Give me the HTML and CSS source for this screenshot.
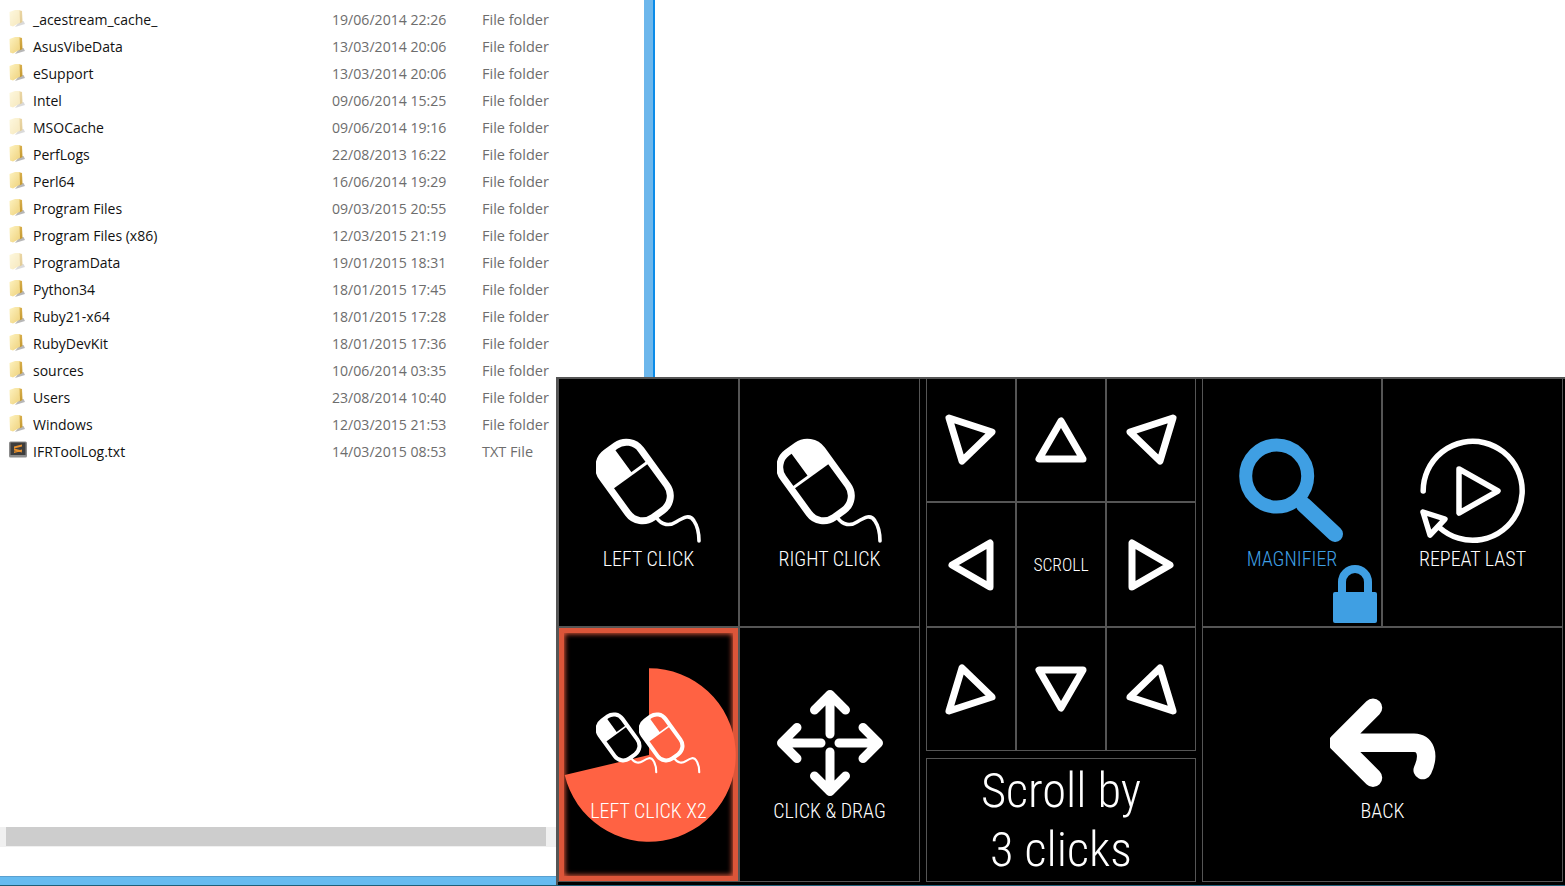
FILE: index.html
```html
<!DOCTYPE html>
<html lang="en">

<head>
    <meta charset="UTF-8">
    <meta name="viewport" content="width=device-width, initial-scale=1.0">
    <title>eye control panel</title>
    <link rel="stylesheet" href="styles.css">
</head>

<body>
    <svg class="defs" width="0" height="0" aria-hidden="true">
        <defs>
            <linearGradient id="folderBack" x1="0" y1="0" x2="0" y2="1">
                <stop offset="0" stop-color="#d9b04e"/>
                <stop offset="1" stop-color="#c4982f"/>
            </linearGradient>
            <linearGradient id="folderFront" x1="0" y1="0" x2="1" y2="1">
                <stop offset="0" stop-color="#fdf2bf"/>
                <stop offset="1" stop-color="#efd27c"/>
            </linearGradient>
            <symbol id="folder" viewBox="0 0 16 18">
                <path d="M10 13 L14.5 12 L16 15 L6 18 Z" fill="#999" opacity="0.7"/>
                <path d="M9.5 1 L13 2 L13.5 13 L10.5 14.5 Z" fill="url(#folderBack)"/>
                <path d="M0.5 3 L6 1 L10.5 1 L11 13.5 L4 17.5 L1 16.5 Z" fill="url(#folderFront)"/>
            </symbol>
            <symbol id="mouseBody" viewBox="0 0 106 106">
                <g transform="translate(38.5 43.5) rotate(-36)">
                    <rect x="-24" y="-40" width="48" height="80" rx="18" fill="none" stroke="#fff" stroke-width="7"/>
                    <line x1="-24" y1="-8" x2="24" y2="-8" stroke="#fff" stroke-width="3"/>
                </g>
                <path d="M60 79 C66 88 74 88 80 84 C88 79 94 76 98 83 C102 89 103 96 103 103" fill="none" stroke="#fff" stroke-width="3.6" stroke-linecap="round"/>
            </symbol>
            <symbol id="mouseLeft" viewBox="0 0 106 106">
                <use href="#mouseBody" width="106" height="106"/>
                <g transform="translate(38.5 43.5) rotate(-36)">
                    <path d="M-24 -8 V-22 A18 18 0 0 1 -6 -40 H3 V-8 Z" fill="#fff"/>
                </g>
            </symbol>
            <symbol id="mouseRight" viewBox="0 0 106 106">
                <use href="#mouseBody" width="106" height="106"/>
                <g transform="translate(38.5 43.5) rotate(-36)">
                    <path d="M24 -8 V-22 A18 18 0 0 0 6 -40 H-3 V-8 Z" fill="#fff"/>
                </g>
            </symbol>
        </defs>
    </svg>

    <div class="main">
        <div class="explorer">
            <div class="file-list">
                <div class="file-row hidden-item"><svg class="file-icon"><use href="#folder"/></svg><span class="file-name">_acestream_cache_</span><span class="file-date">19/06/2014 22:26</span><span class="file-type">File folder</span></div>
                <div class="file-row"><svg class="file-icon"><use href="#folder"/></svg><span class="file-name">AsusVibeData</span><span class="file-date">13/03/2014 20:06</span><span class="file-type">File folder</span></div>
                <div class="file-row"><svg class="file-icon"><use href="#folder"/></svg><span class="file-name">eSupport</span><span class="file-date">13/03/2014 20:06</span><span class="file-type">File folder</span></div>
                <div class="file-row hidden-item"><svg class="file-icon"><use href="#folder"/></svg><span class="file-name">Intel</span><span class="file-date">09/06/2014 15:25</span><span class="file-type">File folder</span></div>
                <div class="file-row hidden-item"><svg class="file-icon"><use href="#folder"/></svg><span class="file-name">MSOCache</span><span class="file-date">09/06/2014 19:16</span><span class="file-type">File folder</span></div>
                <div class="file-row"><svg class="file-icon"><use href="#folder"/></svg><span class="file-name">PerfLogs</span><span class="file-date">22/08/2013 16:22</span><span class="file-type">File folder</span></div>
                <div class="file-row"><svg class="file-icon"><use href="#folder"/></svg><span class="file-name">Perl64</span><span class="file-date">16/06/2014 19:29</span><span class="file-type">File folder</span></div>
                <div class="file-row"><svg class="file-icon"><use href="#folder"/></svg><span class="file-name">Program Files</span><span class="file-date">09/03/2015 20:55</span><span class="file-type">File folder</span></div>
                <div class="file-row"><svg class="file-icon"><use href="#folder"/></svg><span class="file-name">Program Files (x86)</span><span class="file-date">12/03/2015 21:19</span><span class="file-type">File folder</span></div>
                <div class="file-row hidden-item"><svg class="file-icon"><use href="#folder"/></svg><span class="file-name">ProgramData</span><span class="file-date">19/01/2015 18:31</span><span class="file-type">File folder</span></div>
                <div class="file-row"><svg class="file-icon"><use href="#folder"/></svg><span class="file-name">Python34</span><span class="file-date">18/01/2015 17:45</span><span class="file-type">File folder</span></div>
                <div class="file-row"><svg class="file-icon"><use href="#folder"/></svg><span class="file-name">Ruby21-x64</span><span class="file-date">18/01/2015 17:28</span><span class="file-type">File folder</span></div>
                <div class="file-row"><svg class="file-icon"><use href="#folder"/></svg><span class="file-name">RubyDevKit</span><span class="file-date">18/01/2015 17:36</span><span class="file-type">File folder</span></div>
                <div class="file-row"><svg class="file-icon"><use href="#folder"/></svg><span class="file-name">sources</span><span class="file-date">10/06/2014 03:35</span><span class="file-type">File folder</span></div>
                <div class="file-row"><svg class="file-icon"><use href="#folder"/></svg><span class="file-name">Users</span><span class="file-date">23/08/2014 10:40</span><span class="file-type">File folder</span></div>
                <div class="file-row"><svg class="file-icon"><use href="#folder"/></svg><span class="file-name">Windows</span><span class="file-date">12/03/2015 21:53</span><span class="file-type">File folder</span></div>
                <div class="file-row">
                    <svg class="file-icon" viewBox="0 0 18 18">
                        <rect x="0" y="0.5" width="18" height="16" rx="1.5" fill="#8c8c8c"/>
                        <rect x="1.5" y="1.5" width="15" height="12.5" fill="#3d3d3d"/>
                        <path d="M5 5.5 L13 3.5 V5.5 L5 7.5 Z M5 7.5 L13 9.5 V11.5 L5 9.5 Z M5 10.5 L13 8.5 V10 L5 12 Z" fill="#e8912e"/>
                    </svg>
                    <span class="file-name">IFRToolLog.txt</span><span class="file-date">14/03/2015 08:53</span><span class="file-type">TXT File</span>
                </div>
            </div>
            <div class="h-scroll">
                <div class="h-thumb"></div>
            </div>
        </div>
        <div class="window-edge"></div>
    </div>
    <div class="bottom-bar"></div>
    <div class="taskbar"></div>

    <div class="panel">
        <div class="group click-group">
            <div class="cell">
                <svg class="icon" viewBox="0 0 106 106"><use href="#mouseLeft" width="106" height="106"/></svg>
                <span class="label">LEFT CLICK</span>
            </div>
            <div class="cell">
                <svg class="icon" viewBox="0 0 106 106"><use href="#mouseRight" width="106" height="106"/></svg>
                <span class="label">RIGHT CLICK</span>
            </div>
            <div class="cell is-active">
                <svg class="dwell" viewBox="0 0 180 254">
                    <path d="M90 127 V40.3 A86.7 86.7 0 1 1 5.7 147 Z" fill="#ff6243"/>
                </svg>
                <svg class="icon" viewBox="0 0 106 106">
                    <use href="#mouseLeft" x="0" y="22" width="62" height="62"/>
                    <use href="#mouseLeft" x="43" y="22" width="62" height="62"/>
                </svg>
                <span class="label">LEFT CLICK X2</span>
            </div>
            <div class="cell">
                <svg class="icon" viewBox="-53 -53 106 106">
                    <g fill="none" stroke="#fff" stroke-width="9" stroke-linecap="round" stroke-linejoin="round">
                        <path d="M0 -48.5 V-9 M-15.5 -33 L0 -48.5 L15.5 -33"/>
                        <path d="M0 48.5 V9 M-15.5 33 L0 48.5 L15.5 33"/>
                        <path d="M-48.5 0 H-9 M-33 -15.5 L-48.5 0 L-33 15.5"/>
                        <path d="M48.5 0 H9 M33 -15.5 L48.5 0 L33 15.5"/>
                    </g>
                </svg>
                <span class="label">CLICK &amp; DRAG</span>
            </div>
        </div>

        <div class="scroll-col">
            <div class="group scroll-group">
                <div class="cell"><svg class="arrow" viewBox="-30 -30 60 60"><polygon points="-22,-22 21,-8 -9,21"/></svg></div>
                <div class="cell"><svg class="arrow" viewBox="-30 -30 60 60"><polygon points="0,-19 -22,19 22,19"/></svg></div>
                <div class="cell"><svg class="arrow" viewBox="-30 -30 60 60"><polygon points="22,-22 -21,-8 9,21"/></svg></div>
                <div class="cell"><svg class="arrow" viewBox="-30 -30 60 60"><polygon points="-19,0 19,-22 19,22"/></svg></div>
                <div class="cell"><span class="label small">SCROLL</span></div>
                <div class="cell"><svg class="arrow" viewBox="-30 -30 60 60"><polygon points="19,0 -19,-22 -19,22"/></svg></div>
                <div class="cell"><svg class="arrow" viewBox="-30 -30 60 60"><polygon points="-22,22 21,8 -9,-21"/></svg></div>
                <div class="cell"><svg class="arrow" viewBox="-30 -30 60 60"><polygon points="0,19 -22,-19 22,-19"/></svg></div>
                <div class="cell"><svg class="arrow" viewBox="-30 -30 60 60"><polygon points="22,22 -21,8 9,-21"/></svg></div>
            </div>
            <div class="scroll-amount"><span class="label big">Scroll by<br>3 clicks</span></div>
        </div>

        <div class="group extra-group">
            <div class="cell">
                <svg class="icon" viewBox="0 0 106 106">
                    <circle cx="37.7" cy="38" r="31" fill="none" stroke="#3f9fe3" stroke-width="13"/>
                    <line x1="65" y1="67" x2="96" y2="96" stroke="#3f9fe3" stroke-width="16" stroke-linecap="round"/>
                </svg>
                <span class="label is-blue">MAGNIFIER</span>
                <svg class="lock" viewBox="0 0 44 58">
                    <path d="M9 30 V17 A13 13 0 0 1 35 17 V30" fill="none" stroke="#3f9fe3" stroke-width="8"/>
                    <rect x="0" y="27" width="44" height="31" rx="2" fill="#3f9fe3"/>
                </svg>
            </div>
            <div class="cell">
                <svg class="icon" viewBox="0 0 106 106">
                    <g fill="none" stroke="#fff" stroke-width="5.5" stroke-linecap="round" stroke-linejoin="round">
                        <path d="M3.2 53 A49.5 49.5 0 1 1 20 90"/>
                        <polygon points="3,74 25,81 10,97"/>
                        <polygon points="39,31 78,53 39,75"/>
                    </g>
                </svg>
                <span class="label">REPEAT LAST</span>
            </div>
            <div class="cell wide">
                <svg class="icon" viewBox="0 0 106 106">
                    <path d="M43 17.7 L8 52.7 L43 87.7 M8 52.7 H84 C95 52.7 100 64 92.7 80" fill="none" stroke="#fff" stroke-width="18.5" stroke-linecap="round" stroke-linejoin="round"/>
                </svg>
                <span class="label">BACK</span>
            </div>
        </div>
    </div>
</body>

</html>
```

FILE: styles.css
```css
html, body {
    margin: 0;
    height: 886px;
    overflow: hidden;
    background-color: #ffffff;
}
body {
    position: relative;
    display: flex;
    flex-direction: column;
    font-family: "Open Sans", "Noto Sans", sans-serif;
}
.defs {
    position: absolute;
}

/* file explorer behind the panel */
.main {
    display: flex;
    height: 876px;
}
.explorer {
    width: 644px;
    display: flex;
    flex-direction: column;
}
.file-list {
    flex: 1;
    padding-top: 6px;
}
.file-row {
    display: flex;
    align-items: center;
    height: 27px;
    padding-left: 9px;
    font-size: 14.5px;
    white-space: nowrap;
}
.file-icon {
    width: 16px;
    height: 18px;
    margin-right: 8px;
    margin-top: -4px;
}
.file-row:last-child .file-icon {
    width: 18px;
    margin-right: 6px;
}
.hidden-item .file-icon {
    opacity: 0.5;
}
.file-name {
    width: 299px;
    font-size: 14px;
    color: #111111;
}
.file-date {
    width: 150px;
    font-size: 14.1px;
    color: #6d6d6d;
}
.file-type {
    color: #6d6d6d;
}
.h-scroll {
    height: 20px;
    margin-bottom: 29px;
    padding-left: 6px;
    background-color: #f0f0f0;
}
.h-thumb {
    width: 540px;
    height: 19px;
    background-color: #cdcdcd;
}
.window-edge {
    width: 9px;
    background-color: #6db7ec;
    border-right: 2px solid #0a8be8;
}
.bottom-bar {
    height: 8px;
    background-color: #66bbf0;
    border-top: 1px solid #5aa0d0;
}
.taskbar {
    flex: 1;
    background-color: #1f5f78;
}

/* eye tracker panel, floats over the desktop */
.panel {
    position: absolute;
    left: 556px;
    top: 377px;
    width: 1009px;
    height: 508px;
    box-sizing: border-box;
    display: flex;
    gap: 6px;
    background-color: #000000;
    border-top: 2px solid #555555;
    border-left: 2px solid #555555;
}
.group {
    display: grid;
    gap: 2px;
    background-color: #555555;
    padding: 0 1px 1px;
}
.click-group {
    width: 362px;
    height: 503px;
    box-sizing: border-box;
    grid-template-columns: 1fr 1fr;
    grid-template-rows: 247px 253px;
}
.scroll-col {
    width: 270px;
    height: 503px;
    display: flex;
    flex-direction: column;
    gap: 7px;
}
.scroll-group {
    height: 372px;
    box-sizing: border-box;
    grid-template-columns: 1fr 1fr 1fr;
    grid-template-rows: 122px 123px 122px;
}
.scroll-amount {
    flex: 1;
    display: flex;
    align-items: center;
    justify-content: center;
    border: 1px solid #555555;
    text-align: center;
}
.extra-group {
    width: 361px;
    height: 503px;
    box-sizing: border-box;
    grid-template-columns: 178px 179px;
    grid-template-rows: 247px 253px;
}
.cell {
    position: relative;
    display: flex;
    flex-direction: column;
    align-items: center;
    justify-content: center;
    background-color: #000000;
}
.cell.wide {
    grid-column: span 2;
}
.cell.is-active {
    box-shadow: inset 0 0 0 5px #dc5539, inset 0 0 5px 6px #dc5539;
}
.icon {
    position: relative;
    width: 106px;
    height: 106px;
    margin-top: 5px;
    margin-bottom: 1px;
}
.arrow {
    width: 60px;
    height: 60px;
    fill: none;
    stroke: #ffffff;
    stroke-width: 7;
    stroke-linejoin: round;
}
.dwell {
    position: absolute;
    left: 0;
    top: 0;
    width: 180px;
    height: 254px;
}
.lock {
    position: absolute;
    right: 4px;
    bottom: 3px;
    width: 44px;
    height: 58px;
}
.label {
    position: relative;
    font-family: Roboto, sans-serif;
    font-weight: 300;
    font-stretch: 75%;
    font-size: 20px;
    line-height: 28px;
    color: #ffffff;
    white-space: nowrap;
}
.label.small {
    font-size: 17.5px;
}
.label.big {
    font-size: 48.5px;
    line-height: 59px;
}
.label.is-blue {
    color: #3f9fe3;
}
```
